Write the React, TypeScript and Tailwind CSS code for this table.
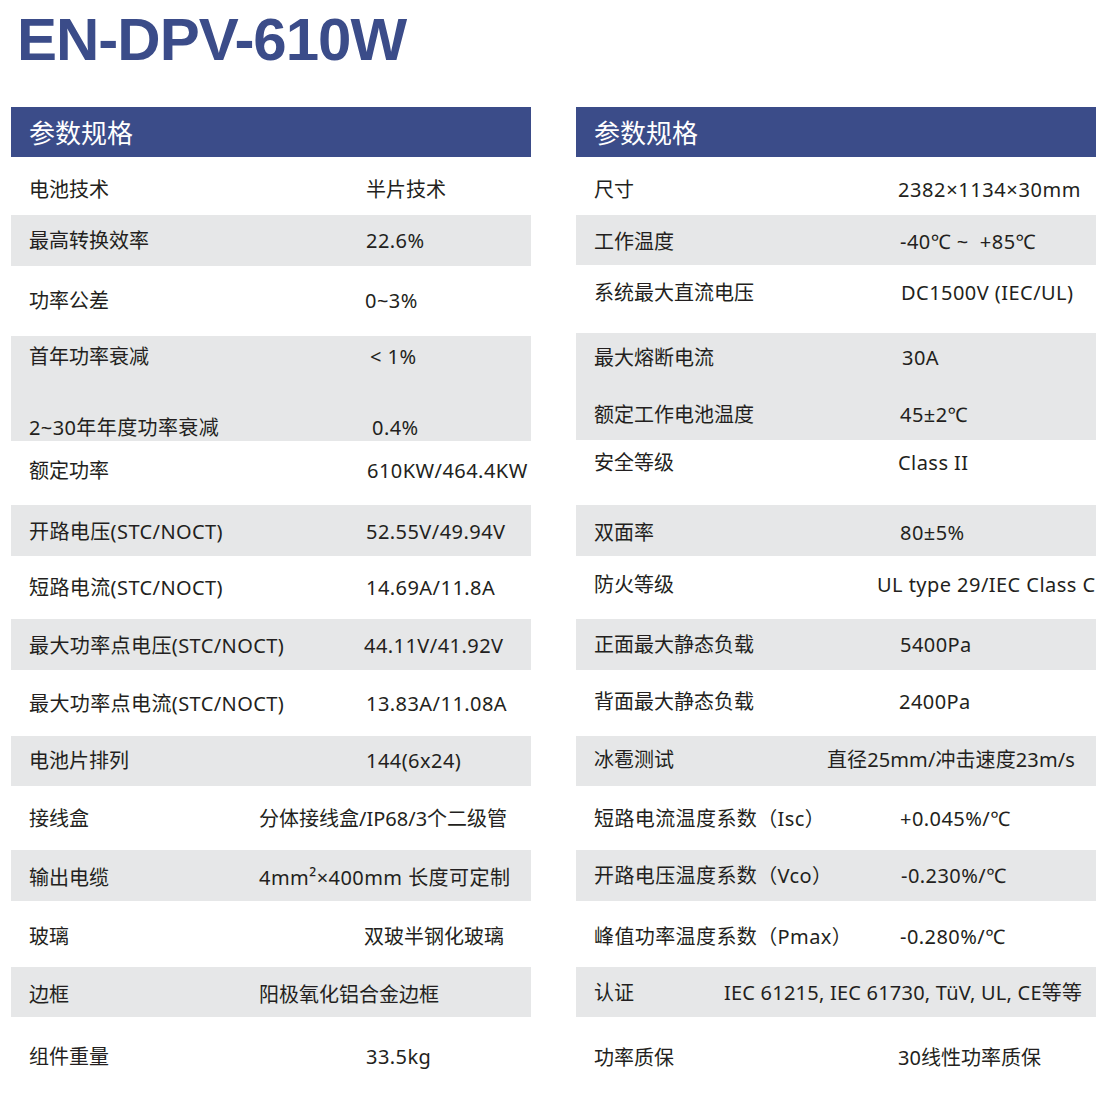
import clsx from "clsx";

interface Line {
  label: string;
  value: string;
  vx: string; // label column width = value offset from panel edge
  mt?: string;
  vc?: string;
}
interface Row {
  h: string;
  pt: string;
  gray?: boolean;
  lines: Line[];
}

const leftRows: Row[] = [
  { h: "h-[58px]", pt: "pt-[19px]", lines: [{ label: "电池技术", value: "半片技术", vx: "w-[355px]" }] },
  { h: "h-[51px]", pt: "pt-[12px]", gray: true, lines: [{ label: "最高转换效率", value: "22.6%", vx: "w-[355px]" }] },
  { h: "h-[70px]", pt: "pt-[21px]", lines: [{ label: "功率公差", value: "0~3%", vx: "w-[354px]" }] },
  {
    h: "h-[105px]",
    pt: "pt-[7px]",
    gray: true,
    lines: [
      { label: "首年功率衰减", value: "< 1%", vx: "w-[359px]" },
      { label: "2~30年年度功率衰减", value: "0.4%", vx: "w-[361px]", mt: "mt-[43px]" },
    ],
  },
  { h: "h-[64px]", pt: "pt-[16px]", lines: [{ label: "额定功率", value: "610KW/464.4KW", vx: "w-[356px]" }] },
  { h: "h-[51px]", pt: "pt-[13px]", gray: true, lines: [{ label: "开路电压(STC/NOCT)", value: "52.55V/49.94V", vx: "w-[355px]" }] },
  { h: "h-[63px]", pt: "pt-[18px]", lines: [{ label: "短路电流(STC/NOCT)", value: "14.69A/11.8A", vx: "w-[355px]" }] },
  { h: "h-[51px]", pt: "pt-[13px]", gray: true, lines: [{ label: "最大功率点电压(STC/NOCT)", value: "44.11V/41.92V", vx: "w-[353px]" }] },
  { h: "h-[66px]", pt: "pt-[20px]", lines: [{ label: "最大功率点电流(STC/NOCT)", value: "13.83A/11.08A", vx: "w-[355px]" }] },
  { h: "h-[50px]", pt: "pt-[11px]", gray: true, lines: [{ label: "电池片排列", value: "144(6x24)", vx: "w-[355px]" }] },
  { h: "h-[64px]", pt: "pt-[19px]", lines: [{ label: "接线盒", value: "分体接线盒/IP68/3个二级管", vx: "w-[248px]", vc: "tracking-[0px]" }] },
  { h: "h-[51px]", pt: "pt-[14px]", gray: true, lines: [{ label: "输出电缆", value: "4mm²×400mm 长度可定制", vx: "w-[248px]" }] },
  { h: "h-[66px]", pt: "pt-[22px]", lines: [{ label: "玻璃", value: "双玻半钢化玻璃", vx: "w-[353px]" }] },
  { h: "h-[50px]", pt: "pt-[14px]", gray: true, lines: [{ label: "边框", value: "阳极氧化铝合金边框", vx: "w-[248px]" }] },
  { h: "h-[97px]", pt: "pt-[26px]", lines: [{ label: "组件重量", value: "33.5kg", vx: "w-[355px]" }] },
];

const rightRows: Row[] = [
  { h: "h-[58px]", pt: "pt-[19px]", lines: [{ label: "尺寸", value: "2382×1134×30mm", vx: "w-[322px]", vc: "tracking-[0.6px]" }] },
  { h: "h-[50px]", pt: "pt-[13px]", gray: true, lines: [{ label: "工作温度", value: "-40℃ ~ \u00a0+85℃", vx: "w-[324px]" }] },
  { h: "h-[68px]", pt: "pt-[14px]", lines: [{ label: "系统最大直流电压", value: "DC1500V (IEC/UL)", vx: "w-[325px]" }] },
  {
    h: "h-[107px]",
    pt: "pt-[11px]",
    gray: true,
    lines: [
      { label: "最大熔断电流", value: "30A", vx: "w-[326px]" },
      { label: "额定工作电池温度", value: "45±2℃", vx: "w-[324px]", mt: "mt-[29px]" },
    ],
  },
  { h: "h-[65px]", pt: "pt-[9px]", lines: [{ label: "安全等级", value: "Class II", vx: "w-[322px]" }] },
  { h: "h-[51px]", pt: "pt-[14px]", gray: true, lines: [{ label: "双面率", value: "80±5%", vx: "w-[324px]" }] },
  { h: "h-[63px]", pt: "pt-[15px]", lines: [{ label: "防火等级", value: "UL type 29/IEC Class C", vx: "w-[301px]" }] },
  { h: "h-[51px]", pt: "pt-[12px]", gray: true, lines: [{ label: "正面最大静态负载", value: "5400Pa", vx: "w-[324px]" }] },
  { h: "h-[66px]", pt: "pt-[18px]", lines: [{ label: "背面最大静态负载", value: "2400Pa", vx: "w-[323px]" }] },
  { h: "h-[50px]", pt: "pt-[10px]", gray: true, lines: [{ label: "冰雹测试", value: "直径25mm/冲击速度23m/s", vx: "w-[251px]", vc: "tracking-[0.1px]" }] },
  { h: "h-[64px]", pt: "pt-[19px]", lines: [{ label: "短路电流温度系数（Isc）", value: "+0.045%/℃", vx: "w-[324px]" }] },
  { h: "h-[51px]", pt: "pt-[12px]", gray: true, lines: [{ label: "开路电压温度系数（Vco）", value: "-0.230%/℃", vx: "w-[325px]" }] },
  { h: "h-[66px]", pt: "pt-[22px]", lines: [{ label: "峰值功率温度系数（Pmax）", value: "-0.280%/℃", vx: "w-[324px]" }] },
  { h: "h-[50px]", pt: "pt-[12px]", gray: true, lines: [{ label: "认证", value: "IEC 61215, IEC 61730, TüV, UL, CE等等", vx: "w-[148px]", vc: "tracking-[0.22px]" }] },
  { h: "h-[97px]", pt: "pt-[27px]", lines: [{ label: "功率质保", value: "30线性功率质保", vx: "w-[322px]", vc: "tracking-[0px]" }] },
];

const hasLatin = (s: string) => /[A-Za-z0-9]/.test(s);

function SpecPanel({ rows }: { rows: Row[] }) {
  return (
    <div className="w-[520px] shrink-0">
      <div className="h-[50px] bg-[#3b4c89] flex items-center pl-[18px] pt-[2px] text-white text-[26px] leading-none">
        参数规格
      </div>
      {rows.map((row, i) => (
        <div key={i} className={clsx("flex flex-col", row.h, row.pt, row.gray && "bg-[#e6e7e8]")}>
          {row.lines.map(line => (
            <div key={line.label} className={clsx("flex h-[28px] items-center whitespace-nowrap", line.mt)}>
              <div className={clsx("shrink-0 pl-[18px]", line.vx)}>
                <span className={clsx(hasLatin(line.label) && "tracking-[0.4px]")}>{line.label}</span>
              </div>
              <div className={line.vc ?? (hasLatin(line.value) ? "tracking-[0.45px]" : "tracking-[0px]")}>
                {line.value}
              </div>
            </div>
          ))}
        </div>
      ))}
    </div>
  );
}

export default function App() {
  return (
    <div
      className="w-[1110px] h-[1114px] bg-white overflow-hidden text-[20px] leading-[28px] text-[#231f20]"
      style={{ fontFamily: '"Noto Sans", "Noto Sans CJK SC", sans-serif' }}
    >
      <div className="h-[107px] pt-[10px] pl-[17px]">
        <h1
          className="text-[60px] leading-[60px] font-bold tracking-[-1px] text-[#3b4c89]"
          style={{ fontFamily: '"Liberation Sans", Arial, sans-serif' }}
        >
          EN-DPV-610W
        </h1>
      </div>
      <div className="flex gap-[45px] pl-[11px]">
        <SpecPanel rows={leftRows} />
        <SpecPanel rows={rightRows} />
      </div>
    </div>
  );
}
